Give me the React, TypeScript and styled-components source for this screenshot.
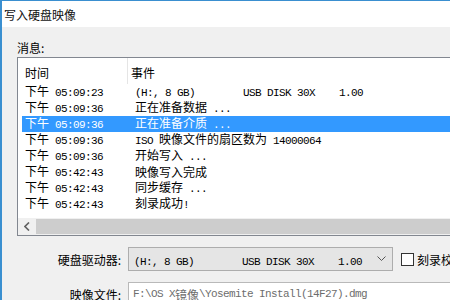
import React from "react";
import styled, { createGlobalStyle } from "styled-components";

const Global = createGlobalStyle`
  html, body { margin: 0; padding: 0; background: #f0f0f0; }
  body { font-family: "Noto Sans CJK SC", "Liberation Sans", sans-serif; font-size: 12px; color: #000; }
  * { box-sizing: border-box; }
`;

const Window = styled.div`
  width: 450px;
  height: 300px;
  overflow: hidden;
  border-left: 2px solid #3a8fd0;
  border-top: 1px solid #3a8fd0;
  background: #f0f0f0;
  display: flex;
  flex-direction: column;
`;

const TitleBar = styled.div`
  height: 26px;
  flex: none;
  background: #fff;
  display: flex;
  align-items: center;
  padding-left: 2px;
  font-size: 12px;
  color: #111;
`;

const Body = styled.div`
  flex: 1;
  padding: 13px 0 0 15px;
  display: flex;
  flex-direction: column;
  min-width: 0;
`;

const Label = styled.div`
  height: 16px;
  line-height: 16px;
  font-size: 12px;
  margin-bottom: 1px;
`;

const ListBox = styled.div`
  width: 470px;
  flex: none;
  border: 1px solid #828790;
  border-right: none;
  background: #fff;
  display: flex;
  flex-direction: column;
`;

const Header = styled.div`
  height: 26px;
  display: flex;
  align-items: stretch;
  padding-left: 4px;
`;

const HeaderCell = styled.div<{ $w?: number }>`
  width: ${(p) => (p.$w ? `${p.$w}px` : "auto")};
  flex: ${(p) => (p.$w ? "none" : "1")};
  padding: 7px 0 0 3px;
  font-size: 12px;
  line-height: 16px;
  border-right: ${(p) => (p.$w ? "1px solid #e5e5e5" : "none")};
`;

const Rows = styled.div`
  display: flex;
  flex-direction: column;
  padding-left: 4px;
  height: 134px;
`;

const Row = styled.div<{ $sel?: boolean }>`
  height: 16px;
  display: flex;
  align-items: center;
  background: ${(p) => (p.$sel ? "#3399ff" : "transparent")};
  color: ${(p) => (p.$sel ? "#fff" : "#000")};
`;

const Cell = styled.div<{ $w?: number }>`
  width: ${(p) => (p.$w ? `${p.$w}px` : "auto")};
  flex: ${(p) => (p.$w ? "none" : "1")};
  padding-left: ${(p) => (p.$w ? 3 : 4)}px;
  white-space: pre;
  line-height: 16px;
  overflow: hidden;
`;

const Cjk = styled.span`
  font-family: "Noto Sans CJK SC", sans-serif;
  font-size: 12px;
`;

const Mono = styled.span`
  font-family: "Liberation Mono", monospace;
  font-size: 11px;
  letter-spacing: -0.6px;
`;

const Scrollbar = styled.div`
  height: 17px;
  display: flex;
  background: #f0f0f0;
`;

const ScrollBtn = styled.div`
  width: 18px;
  flex: none;
  display: flex;
  align-items: center;
  justify-content: center;
  color: #606060;
`;

const Thumb = styled.div`
  flex: 1;
  margin: 1px 0;
  background: #cdcdcd;
`;

const Form = styled.div`
  display: grid;
  grid-template-columns: 104px 265px auto;
  column-gap: 7px;
  row-gap: 11px;
  margin-top: 11px;
  align-items: center;
`;

const FormLabel = styled.div`
  text-align: right;
  font-size: 12px;
  white-space: nowrap;
`;

const Combo = styled.div`
  height: 24px;
  border: 1px solid #adadad;
  background: #e5e5e5;
  display: flex;
  align-items: center;
  padding-left: 5px;
  padding-right: 6px;
`;

const ComboText = styled.div`
  flex: 1;
  white-space: pre;
  overflow: hidden;
`;

const CheckWrap = styled.div`
  display: flex;
  align-items: center;
  gap: 3px;
  margin-left: 1px;
  white-space: nowrap;
  font-size: 12px;
`;

const Box = styled.div`
  width: 13px;
  height: 13px;
  border: 1px solid #333;
  background: #fff;
  flex: none;
`;

const TextField = styled.div`
  height: 24px;
  width: 330px;
  border: 1px solid #b9b9b9;
  border-right: none;
  background: #fff;
  display: flex;
  align-items: center;
  padding-left: 4px;
  color: #6d6d6d;
  white-space: pre;
  grid-column: 2 / span 2;
`;

const mixed = (text: string) =>
  text
    .split(/([\u3000-\u9fff\uff00-\uffef]+)/)
    .filter((s) => s.length > 0)
    .map((s, i) =>
      /[\u3000-\u9fff\uff00-\uffef]/.test(s) ? <Cjk key={i}>{s}</Cjk> : <Mono key={i}>{s}</Mono>
    );

const rows: [string, string][] = [
  ["下午 05:09:23", "(H:, 8 GB)        USB DISK 30X    1.00"],
  ["下午 05:09:36", "正在准备数据 ..."],
  ["下午 05:09:36", "正在准备介质 ..."],
  ["下午 05:09:36", "ISO 映像文件的扇区数为 14000064"],
  ["下午 05:09:36", "开始写入 ..."],
  ["下午 05:42:43", "映像写入完成"],
  ["下午 05:42:43", "同步缓存 ..."],
  ["下午 05:42:43", "刻录成功!"],
];

export default function App() {
  return (
    <>
      <Global />
      <Window>
        <TitleBar>写入硬盘映像</TitleBar>
        <Body>
          <Label>消息:</Label>
          <ListBox>
            <Header>
              <HeaderCell $w={106}>时间</HeaderCell>
              <HeaderCell>事件</HeaderCell>
            </Header>
            <Rows>
              {rows.map(([t, e], i) => (
                <Row key={i} $sel={i === 2}>
                  <Cell $w={109}>{mixed(t)}</Cell>
                  <Cell>{mixed(e)}</Cell>
                </Row>
              ))}
            </Rows>
            <Scrollbar>
              <ScrollBtn>
                <svg width="6" height="9" viewBox="0 0 6 9">
                  <path d="M5 0.5 L1 4.5 L5 8.5" fill="none" stroke="#606060" strokeWidth="1.6" />
                </svg>
              </ScrollBtn>
              <Thumb />
            </Scrollbar>
          </ListBox>
          <Form>
            <FormLabel>硬盘驱动器:</FormLabel>
            <Combo>
              <ComboText>{mixed("(H:, 8 GB)        USB DISK 30X    1.00")}</ComboText>
              <svg width="9" height="6" viewBox="0 0 9 6">
                <path d="M0.5 0.5 L4.5 4.5 L8.5 0.5" fill="none" stroke="#555" strokeWidth="1" />
              </svg>
            </Combo>
            <CheckWrap>
              <Box />
              <span>刻录校验</span>
            </CheckWrap>
            <FormLabel>映像文件:</FormLabel>
            <TextField>{mixed("F:\\OS X镜像\\Yosemite Install(14F27).dmg")}</TextField>
          </Form>
        </Body>
      </Window>
    </>
  );
}
